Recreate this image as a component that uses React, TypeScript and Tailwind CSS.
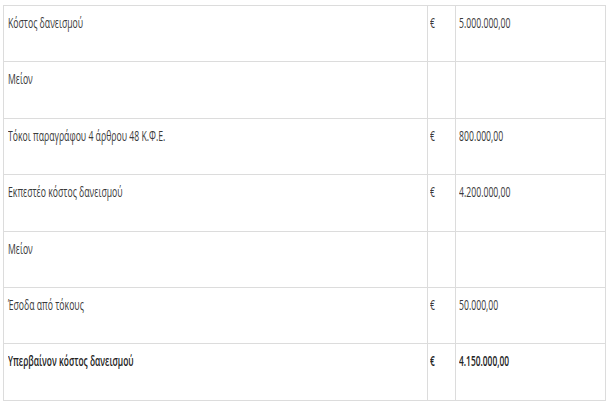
import React from "react";

const rows: { label: string; cur: string; val: string; bold?: boolean; h: string }[] = [
  { label: "Κόστος δανεισμού", cur: "€", val: "5.000.000,00", h: "h-[56px]" },
  { label: "Μείον", cur: "", val: "", h: "h-[57px]" },
  { label: "Τόκοι παραγράφου 4 άρθρου 48 Κ.Φ.Ε.", cur: "€", val: "800.000,00", h: "h-[56px]" },
  { label: "Εκπεστέο κόστος δανεισμού", cur: "€", val: "4.200.000,00", h: "h-[57px]" },
  { label: "Μείον", cur: "", val: "", h: "h-[56px]" },
  { label: "Έσοδα από τόκους", cur: "€", val: "50.000,00", h: "h-[56px]" },
  { label: "Υπερβαίνον κόστος δανεισμού", cur: "€", val: "4.150.000,00", bold: true, h: "h-[57px]" },
];

function T({ children, bold }: { children: React.ReactNode; bold?: boolean }) {
  return (
    <span
      className={`inline-block origin-left whitespace-nowrap text-[14px] leading-[20px] ${bold ? "scale-x-[0.6] font-semibold text-[#222]" : "scale-x-[0.62] text-[#3a3a3a]"}`}
      style={{ fontFamily: '"Open Sans", sans-serif' }}
    >
      {children}
    </span>
  );
}

export default function App() {
  return (
    <div className="w-[612px] h-[408px] bg-white pt-[5px] pl-[3px]">
      <table className="border-collapse w-[602px] table-fixed">
        <colgroup>
          <col className="w-[424px]" />
          <col className="w-[28px]" />
          <col className="w-[150px]" />
        </colgroup>
        <tbody>
          {rows.map((r, i) => (
            <tr key={i} className={r.h}>
              <td className="border border-[#dcdcdc] align-top pl-[4px] pt-[4px] overflow-hidden">
                <T bold={r.bold}>{r.label}</T>
              </td>
              <td className="border border-[#dcdcdc] align-top pl-[2px] pt-[4px] overflow-hidden">
                <T bold={r.bold}>{r.cur}</T>
              </td>
              <td className="border border-[#dcdcdc] align-top pl-[3px] pt-[4px] overflow-hidden">
                <T bold={r.bold}>{r.val}</T>
              </td>
            </tr>
          ))}
        </tbody>
      </table>
    </div>
  );
}
